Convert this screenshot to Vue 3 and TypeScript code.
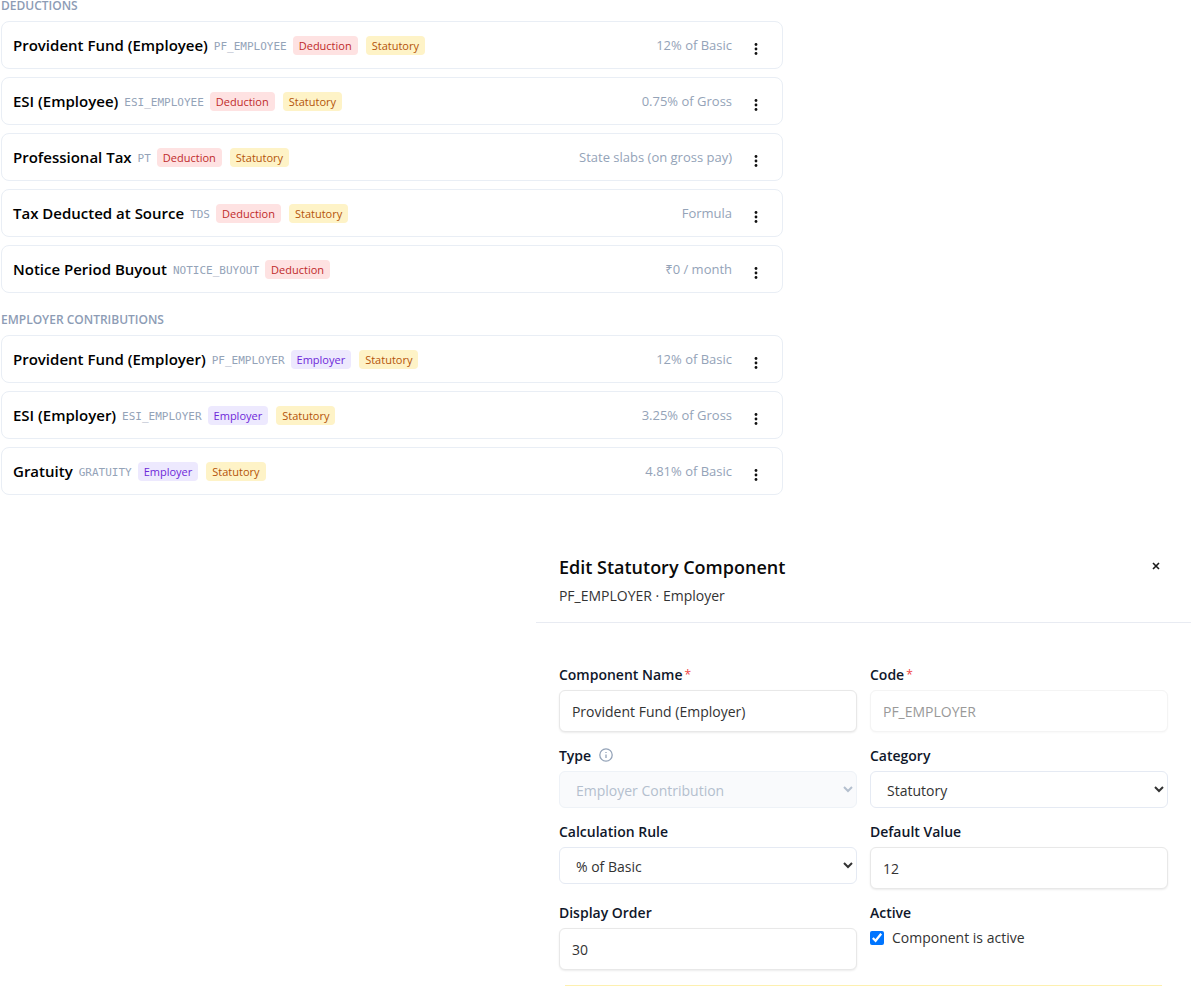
<script setup lang="ts">
import { ref } from 'vue'

type Kind = 'Deduction' | 'Employer'

interface PayComponent {
  name: string
  code: string
  kind: Kind
  statutory: boolean
  rule: string
}

interface Group {
  title: string
  items: PayComponent[]
}

const groups: Group[] = [
  {
    title: 'Deductions',
    items: [
      { name: 'Provident Fund (Employee)', code: 'PF_EMPLOYEE', kind: 'Deduction', statutory: true, rule: '12% of Basic' },
      { name: 'ESI (Employee)', code: 'ESI_EMPLOYEE', kind: 'Deduction', statutory: true, rule: '0.75% of Gross' },
      { name: 'Professional Tax', code: 'PT', kind: 'Deduction', statutory: true, rule: 'State slabs (on gross pay)' },
      { name: 'Tax Deducted at Source', code: 'TDS', kind: 'Deduction', statutory: true, rule: 'Formula' },
      { name: 'Notice Period Buyout', code: 'NOTICE_BUYOUT', kind: 'Deduction', statutory: false, rule: '₹0 / month' },
    ],
  },
  {
    title: 'Employer Contributions',
    items: [
      { name: 'Provident Fund (Employer)', code: 'PF_EMPLOYER', kind: 'Employer', statutory: true, rule: '12% of Basic' },
      { name: 'ESI (Employer)', code: 'ESI_EMPLOYER', kind: 'Employer', statutory: true, rule: '3.25% of Gross' },
      { name: 'Gratuity', code: 'GRATUITY', kind: 'Employer', statutory: true, rule: '4.81% of Basic' },
    ],
  },
]

const componentName = ref('Provident Fund (Employer)')
const code = ref('PF_EMPLOYER')
const type = ref('Employer Contribution')
const category = ref('Statutory')
const rule = ref('% of Basic')
const defaultValue = ref('12')
const displayOrder = ref('30')
const active = ref(true)
</script>

<template>
  <main class="page">
    <div class="list">
      <section v-for="group in groups" :key="group.title" class="group">
        <h2 class="group-title">{{ group.title }}</h2>
        <ul class="cards">
          <li v-for="item in group.items" :key="item.code" class="card">
            <span class="name">{{ item.name }}</span>
            <span class="code">{{ item.code }}</span>
            <span class="badge" :class="item.kind.toLowerCase()">{{ item.kind }}</span>
            <span v-if="item.statutory" class="badge statutory">Statutory</span>
            <span class="rule">{{ item.rule }}</span>
            <button type="button" class="menu" :aria-label="'Actions for ' + item.name">
              <svg width="4" height="14" viewBox="0 0 4 14" aria-hidden="true">
                <circle cx="2" cy="2.5" r="1.4" />
                <circle cx="2" cy="7" r="1.4" />
                <circle cx="2" cy="11.5" r="1.4" />
              </svg>
            </button>
          </li>
        </ul>
      </section>
    </div>

    <section class="panel" aria-labelledby="panel-title">
      <header class="panel-head">
        <div>
          <h1 id="panel-title">Edit Statutory Component</h1>
          <p>PF_EMPLOYER · Employer</p>
        </div>
        <button type="button" class="close" aria-label="Close">
          <svg width="8" height="8" viewBox="0 0 8 8" aria-hidden="true">
            <path d="M1 1l6 6M7 1l-6 6" />
          </svg>
        </button>
      </header>

      <form class="form" @submit.prevent>
        <div class="field">
          <label for="f-name">Component Name<span class="req">*</span></label>
          <input id="f-name" v-model="componentName" type="text" />
        </div>
        <div class="field">
          <label for="f-code">Code<span class="req">*</span></label>
          <input id="f-code" v-model="code" type="text" disabled />
        </div>
        <div class="field">
          <label for="f-type">
            Type
            <svg class="info" width="14" height="14" viewBox="0 0 14 14" aria-hidden="true">
              <circle cx="7" cy="7" r="6.2" />
              <path d="M7 6.5v3.5M7 4v1" />
            </svg>
          </label>
          <select id="f-type" v-model="type" disabled>
            <option>Employer Contribution</option>
          </select>
        </div>
        <div class="field">
          <label for="f-category">Category</label>
          <select id="f-category" v-model="category">
            <option>Statutory</option>
          </select>
        </div>
        <div class="field">
          <label for="f-rule">Calculation Rule</label>
          <select id="f-rule" v-model="rule">
            <option>% of Basic</option>
          </select>
        </div>
        <div class="field">
          <label for="f-default">Default Value</label>
          <input id="f-default" v-model="defaultValue" type="text" inputmode="decimal" />
        </div>
        <div class="field">
          <label for="f-order">Display Order</label>
          <input id="f-order" v-model="displayOrder" type="text" inputmode="numeric" />
        </div>
        <div class="field" role="group" aria-labelledby="active-title">
          <span id="active-title" class="caption">Active</span>
          <label class="check">
            <input v-model="active" type="checkbox" />
            <span>Component is active</span>
          </label>
        </div>
      </form>
      <div class="notice"></div>
    </section>
  </main>
</template>

<style>
body {
  background: #fff;
}
</style>

<style scoped>
.page {
  font-family: 'Segoe UI', 'Open Sans', 'Noto Sans', sans-serif;
  font-size: 14px;
  color: #0a0a0a;
}

.list {
  box-sizing: border-box;
  width: 66%;
  padding: 0 3px 0 1px;
  display: flex;
  flex-direction: column;
  gap: 21px;
}

.group-title {
  margin: 0 0 9px;
  font-size: 12px;
  line-height: 12px;
  font-weight: 600;
  text-transform: uppercase;
  color: #8d9cb5;
}

.cards {
  list-style: none;
  margin: 0;
  padding: 0;
  display: flex;
  flex-direction: column;
  gap: 8px;
}

.card {
  box-sizing: border-box;
  height: 48px;
  padding: 0 24px 0 11px;
  border: 1px solid #e9eef5;
  border-radius: 8px;
  display: flex;
  align-items: center;
  gap: 8px;
  white-space: nowrap;
}

.name {
  font-size: 15px;
  line-height: 20px;
  font-weight: 600;
  color: #000;
}

.code {
  font-family: Consolas, 'DejaVu Sans Mono', monospace;
  font-size: 11px;
  line-height: 16px;
  padding-top: 3px;
  margin: 0 -2px;
  color: #94a3b8;
}

.badge {
  font-size: 11px;
  line-height: 18px;
  padding: 1px 6px 0;
  border-radius: 4px;
}

.deduction {
  background: #fee2e2;
  color: #c02a2a;
}

.employer {
  background: #ede9fe;
  color: #6d28d9;
}

.statutory {
  background: #fef3c7;
  color: #b45309;
}

.rule {
  margin-left: auto;
  font-size: 13px;
  line-height: 20px;
  color: #94a3b8;
}

.menu {
  width: 4px;
  height: 14px;
  margin-left: 14px;
  margin-top: 7px;
  padding: 0;
  border: 0;
  background: none;
  display: flex;
}

.menu svg {
  fill: #111;
}

.panel {
  margin: 59px 0 0 45%;
}

.panel-head {
  display: flex;
  justify-content: space-between;
  align-items: flex-start;
  padding: 0 31px 15px 23px;
  border-bottom: 1px solid #e8ebf2;
}

.panel-head h1 {
  margin: 0;
  font-size: 18px;
  line-height: 26px;
  font-weight: 600;
}

.panel-head p {
  margin: 5px 0 0;
  line-height: 22px;
  font-size: 14px;
  color: #333;
}

.close {
  margin-top: 8px;
  padding: 0;
  border: 0;
  background: none;
  display: flex;
}

.close svg {
  fill: none;
  stroke: #1a1a1a;
  stroke-width: 1.6;
}

.form {
  display: grid;
  grid-template-columns: 1fr 1fr;
  gap: 13px;
  padding: 41px 23px 0;
}

.field {
  min-width: 0;
  display: flex;
  flex-direction: column;
  gap: 4px;
}

.field > label:first-child,
.caption {
  font-size: 14px;
  line-height: 22px;
  font-weight: 600;
  color: #0f172a;
  display: flex;
  align-items: center;
}

.req {
  margin-left: 2px;
  font-size: 12px;
  font-weight: 400;
  color: #ef4444;
}

.info {
  margin: 0 0 2px 8px;
  fill: none;
  stroke: #94a3b8;
  stroke-width: 1.3;
}

input[type='text'],
select {
  box-sizing: border-box;
  width: 100%;
  font: inherit;
  color: #333;
  background: #fff;
  border-radius: 6px;
}

input[type='text'] {
  height: 42px;
  padding: 1px 12px 0;
  border: 1px solid #e8e8e8;
  box-shadow: 0 1px 2px rgba(0, 0, 0, 0.08);
}

input[type='text']:disabled {
  color: #999;
  border-color: #f4f4f4;
  box-shadow: 0 1px 2px rgba(0, 0, 0, 0.03);
}

select {
  height: 37px;
  padding: 1px 12px 0;
  border: 1px solid #e5eaf3;
}

select:disabled {
  color: #b4bfce;
  background: #f9fafc;
  border-color: #eef2f7;
  opacity: 1;
}

.check {
  display: flex;
  align-items: center;
  gap: 8px;
  line-height: 20px;
  color: #333;
}

.check input {
  width: 14px;
  height: 14px;
  margin: 0;
  accent-color: #0075ff;
}

.notice {
  height: 1px;
  margin: 15px 29px 0;
  background: #fdf0b0;
}
</style>
